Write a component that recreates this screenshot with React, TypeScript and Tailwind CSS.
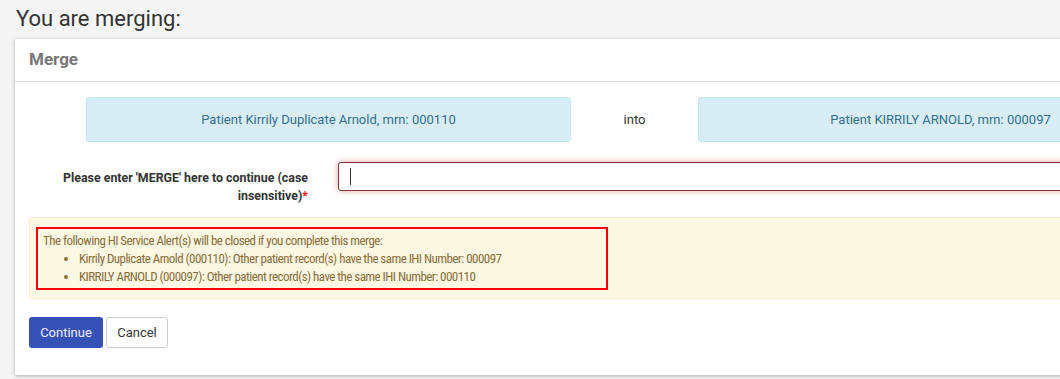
export default function App() {
  return (
    <div className="h-[379px] w-[1060px] overflow-hidden bg-[#f5f5f5] font-['Roboto',sans-serif] text-[#333]">
      <h1 className="ml-4 pt-[5px] text-[22px] leading-[28px] font-normal text-[#333]">You are merging:</h1>
      <div className="ml-[15px] mt-[6px] w-[1270px] bg-white shadow-[0_1px_4px_rgba(0,0,0,0.3)]">
        <div className="flex h-[43px] items-center border-b border-[#ddd] px-[14px]">
          <span className="text-[17px] font-bold text-[#777]">Merge</span>
        </div>
        <div className="px-[14px] pt-[15px] pb-[27px]">
          <div className="flex items-center pl-[57px]">
            <div className="flex h-[45px] w-[485px] items-center justify-center rounded-[3px] border border-[#bce8f1] bg-[#d9edf7] text-[13px] text-[#31708f]">
              Patient Kirrily Duplicate Arnold, mrn: 000110
            </div>
            <div className="w-[127px] text-center text-[13px] text-[#333]">into</div>
            <div className="flex h-[45px] w-[485px] items-center justify-center rounded-[3px] border border-[#bce8f1] bg-[#d9edf7] text-[13px] text-[#31708f]">
              Patient KIRRILY ARNOLD, mrn: 000097
            </div>
          </div>
          <div className="mt-[20px] flex items-start gap-[30px]">
            <label className="w-[279px] pt-[7px] text-right text-[12.4px] leading-[18px] font-bold text-[#333]">
              Please enter 'MERGE' here to continue (case insensitive)
              <span className="text-[#e00]">*</span>
            </label>
            <div className="flex h-[29px] w-[900px] items-center rounded-[3px] border border-[#843534] px-[11px] shadow-[0_0_6px_rgba(206,132,131,0.7)]">
              <span className="h-[17px] w-px bg-[#333]" />
            </div>
          </div>
          <div className="mt-[12px] rounded-[3px] border border-[#faebcc] bg-[#fcf8e3] px-[6px] pt-[9px] pb-[8px] text-[13px] leading-[18px] tracking-[-0.55px] font-stretch-condensed text-[#8a6d3b]">
            <div className="w-[572px] border-2 border-[#ff0000] px-[5px] pt-[3px] pb-[2px]">
              <div>The following HI Service Alert(s) will be closed if you complete this merge:</div>
              <ul className="list-disc pl-[36px]">
                <li>Kirrily Duplicate Arnold (000110): Other patient record(s) have the same IHI Number: 000097</li>
                <li>KIRRILY ARNOLD (000097): Other patient record(s) have the same IHI Number: 000110</li>
              </ul>
            </div>
          </div>
          <div className="mt-[18px] flex gap-[3px]">
            <button type="button" className="h-[31px] w-[74px] rounded-[3px] bg-[#3651b5] text-[13px] text-[#eef]">
              Continue
            </button>
            <button type="button" className="h-[31px] w-[62px] rounded-[3px] border border-[#ccc] bg-white text-[13px] text-[#333]">
              Cancel
            </button>
          </div>
        </div>
      </div>
    </div>
  );
}
